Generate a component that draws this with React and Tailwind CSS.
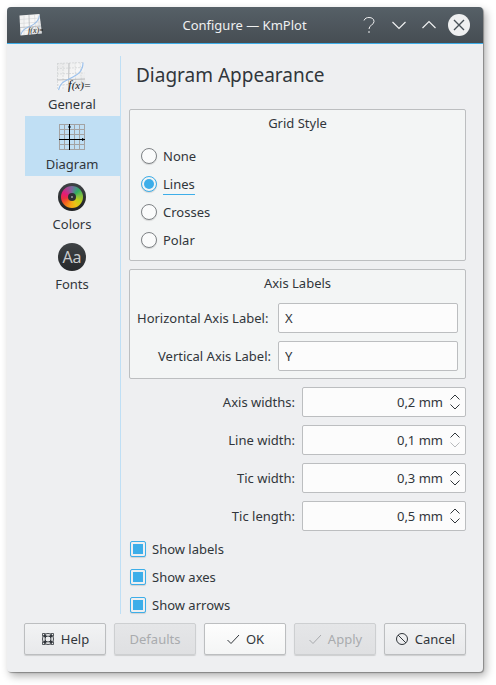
import { useState } from "react";

function PlotIcon() {
  return (
    <svg viewBox="0 0 24 24" className="size-6" aria-hidden="true">
      <defs>
        <linearGradient id="paper" x1="0" y1="0" x2="1" y2="1">
          <stop offset="0" stopColor="#ececec" />
          <stop offset="0.5" stopColor="#fafafa" />
          <stop offset="1" stopColor="#cfd1d3" />
        </linearGradient>
      </defs>
      <path d="M0.500 2.500 20.500 1 23 20.500 1.500 22.500Z" fill="url(#paper)" />
      <path
        d="M1 6.500 21 5M1 10.500 21.500 9M1.500 18 22 16.500M5 2.500V22M15.500 2 17 21M19 1.500 21 20.500"
        stroke="#d3d5d7"
        strokeWidth="0.600"
        fill="none"
      />
      <path d="M1 14.500 22 13M10 2 10.500 21.500" stroke="#abaeb1" strokeWidth="0.700" fill="none" />
      <path d="M2 21.500C4 15 8 15 11 13.500S20 9 20.500 2.500" stroke="#9dbfe6" strokeWidth="1.100" fill="none" />
      <text x="9" y="20" fontFamily="Liberation Serif, serif" fontStyle="italic" fontSize="8" fill="#1c1e20">
        f(x)=
      </text>
    </svg>
  );
}

function GeneralIcon() {
  return (
    <svg viewBox="0 0 32 32" className="size-8 overflow-visible" aria-hidden="true">
      <defs>
        <linearGradient id="sheet" x1="0" y1="0" x2="1" y2="1">
          <stop offset="0" stopColor="#e6e7e8" />
          <stop offset="0.5" stopColor="#f7f7f7" />
          <stop offset="1" stopColor="#dcdee0" />
        </linearGradient>
      </defs>
      <path d="M1 2 27 1 30 26 1 29Z" fill="url(#sheet)" />
      <path
        d="M1 2.500 27 1.500M1 7.500 28 6.500M1 13 28.500 12M1 24 29 23M1.500 2V29M7 2V29M19 1.500 20 28M24 1.500 26 27"
        stroke="#d3d5d7"
        strokeWidth="0.800"
        strokeDasharray="2 1"
        fill="none"
      />
      <path d="M1 19 29 18M13 2 12.500 29" stroke="#adb0b3" strokeWidth="0.800" fill="none" />
      <path d="M2.500 29C5 20 10 20 14 17.500S27 13 27 1.500" stroke="#9cc2ee" strokeWidth="1.200" fill="none" />
      <text x="12" y="28" fontFamily="Liberation Serif, serif" fontStyle="italic" fontSize="11" fill="#101214">
        <tspan fontSize="13">f</tspan>(x)=
      </text>
    </svg>
  );
}

function GridIcon() {
  return (
    <svg viewBox="0 0 32 32" className="size-8" aria-hidden="true">
      <path
        d="M3.500 3V29M8.500 3V29M18.500 3V29M23.500 3V29M28.500 3V29M3 3.500H29M3 8.500H29M3 13.500H29M3 23.500H29M3 28.500H29"
        stroke="#a3a3a3"
        strokeWidth="1"
        fill="none"
      />
      <path d="M13.500 3V29M3 18.500H29" stroke="#000" strokeWidth="1" />
      <path d="M12 6.500 13.500 3.500 15 6.500ZM26 17 29 18.500 26 20Z" fill="#000" />
    </svg>
  );
}

function ColorsIcon() {
  return (
    <span className="flex size-7 items-center justify-center rounded-full bg-linear-to-b from-[#3f4346] to-[#1f2123]">
      <span className="flex size-[22px] items-center justify-center rounded-full bg-[conic-gradient(#7a6aa0_0deg,#4f8f8a_22deg,#2fae62_45deg,#7fc043_80deg,#c0d01c_120deg,#e9c416_155deg,#f6a316_190deg,#f36a1c_225deg,#ea2f3f_260deg,#e51a78_295deg,#b0408f_325deg,#7a6aa0_360deg)]">
        <span className="flex size-2 items-center justify-center rounded-full bg-[#2c3033]">
          <span className="size-0.5 rounded-full bg-[#9da0a2]" />
        </span>
      </span>
    </span>
  );
}

function FontsIcon() {
  return (
    <span className="flex size-7 items-center justify-center rounded-full bg-linear-to-b from-[#3f4346] to-[#27292b] text-base leading-4 text-[#c9cbcc]">
      Aa
    </span>
  );
}

function TickIcon() {
  return (
    <svg viewBox="0 0 14 14" className="size-3.5" fill="none" stroke="currentColor" aria-hidden="true">
      <path d="M1.500 8 5 11.500 13 3" />
    </svg>
  );
}

function HelpIcon() {
  return (
    <svg viewBox="0 0 14 14" className="size-3.5" fill="none" stroke="currentColor" aria-hidden="true">
      <circle cx="7" cy="7" r="5.500" strokeWidth="0.900" />
      <circle cx="7" cy="7" r="3" strokeWidth="0.900" />
      <path d="M3 3 5 5M11 3 9 5M3 11 5 9M11 11 9 9" strokeWidth="2.600" />
      <path d="M1.500 4.500V1.500H4.500M9.500 1.500H12.500V4.500M1.500 9.500V12.500H4.500M9.500 12.500H12.500V9.500" strokeWidth="0.800" />
    </svg>
  );
}

function CancelIcon() {
  return (
    <svg viewBox="0 0 14 14" className="size-3.5" fill="none" stroke="currentColor" aria-hidden="true">
      <circle cx="7" cy="7" r="5.500" />
      <path d="M3 3 11 11" />
    </svg>
  );
}

const pages = [
  { name: "General", Icon: GeneralIcon },
  { name: "Diagram", Icon: GridIcon },
  { name: "Colors", Icon: ColorsIcon },
  { name: "Fonts", Icon: FontsIcon },
];

function TitleBar() {
  return (
    <header className="grid grid-cols-[1fr_auto_1fr] items-center rounded-t border-b border-[#3daee9] bg-linear-to-b from-[#566067] to-[#464d53] pr-[13px] pl-3 text-[#eff0f1]">
      <PlotIcon />
      <h1 className="text-[13px] leading-9">Configure — KmPlot</h1>
      <div className="flex items-center justify-end gap-2">
        <button type="button" aria-label="Help" className="flex size-[22px] items-center justify-center">
          <svg viewBox="0 0 22 22" className="size-[22px]" fill="none" stroke="currentColor">
            <path d="M6 6.500C7 4 9 3.500 11 3.500 14 3.500 16 5 16 7.500 16 11 11 11 11 15" />
            <path d="M11 17V19" />
          </svg>
        </button>
        <button type="button" aria-label="Minimize" className="flex size-[22px] items-center justify-center">
          <svg viewBox="0 0 22 22" className="size-[22px]" fill="none" stroke="currentColor" strokeWidth="1.200">
            <path d="M4.500 8 11 14.500 17.500 8" />
          </svg>
        </button>
        <button type="button" aria-label="Maximize" className="flex size-[22px] items-center justify-center">
          <svg viewBox="0 0 22 22" className="size-[22px]" fill="none" stroke="currentColor" strokeWidth="1.200">
            <path d="M4.500 14 11 7.500 17.500 14" />
          </svg>
        </button>
        <button type="button" aria-label="Close" className="flex size-[22px] items-center justify-center rounded-full bg-[#eff0f1] text-[#475057]">
          <svg viewBox="0 0 22 22" className="size-[22px]" fill="none" stroke="currentColor" strokeWidth="1.400">
            <path d="M6 6 16 16M16 6 6 16" />
          </svg>
        </button>
      </div>
    </header>
  );
}

function Sidebar() {
  return (
    <nav className="ml-px w-24 shrink-0 border-r border-[#bfdff5]">
      {pages.map(({ name, Icon }) => (
        <button
          key={name}
          type="button"
          aria-current={name === "Diagram" ? "page" : undefined}
          className="flex h-15 w-full flex-col items-center pt-[5px] pr-px aria-[current=page]:bg-[#c0dff4]"
        >
          <span className="flex size-8 items-center justify-center">
            <Icon />
          </span>
          <span className="leading-[22px]">{name}</span>
        </button>
      ))}
    </nav>
  );
}

function GridStyle() {
  const [style, setStyle] = useState("Lines");
  return (
    <section aria-label="Grid Style" className="rounded-xs border border-[#bcbec0] bg-[#f3f5f5] pt-1 pb-1.5">
      <h3 className="mb-2.5 text-center leading-[18px]">Grid Style</h3>
      {["None", "Lines", "Crosses", "Polar"].map((name) => (
        <label key={name} className="flex h-7 items-center gap-1.5 pl-[11px]">
          <input
            type="radio"
            name="grid"
            checked={style === name}
            onChange={() => setStyle(name)}
            className="peer size-4 appearance-none rounded-full border border-[#7f8386] bg-[#fafbfb] p-0.5 shadow-[0_1px_1px_#00000020] checked:border-[#3daee9] checked:bg-[#3daee9] checked:bg-clip-content"
          />
          <span className="border-y border-transparent leading-5 peer-checked:border-b-[#3daee9]">{name}</span>
        </label>
      ))}
    </section>
  );
}

function AxisLabels() {
  return (
    <section aria-label="Axis Labels" className="mt-2 rounded-xs border border-[#bcbec0] bg-[#f3f5f5] px-[7px] pt-1 pb-[7px]">
      <h3 className="mb-[11px] text-center leading-[18px]">Axis Labels</h3>
      <div className="grid grid-cols-[134px_1fr] items-center gap-x-[7px] gap-y-2">
        <label htmlFor="horizontal" className="justify-self-start whitespace-nowrap">Horizontal Axis Label:</label>
        <input id="horizontal" defaultValue="X" className="h-[30px] w-full min-w-0 rounded-xs border border-[#bcbec0] bg-[#fcfcfc] px-1.5" />
        <label htmlFor="vertical" className="justify-self-end whitespace-nowrap">Vertical Axis Label:</label>
        <input id="vertical" defaultValue="Y" className="h-[30px] w-full min-w-0 rounded-xs border border-[#bcbec0] bg-[#fcfcfc] px-1.5" />
      </div>
    </section>
  );
}

function Spin({ id, label, value, atMinimum = false }) {
  return (
    <>
      <label htmlFor={id} className="justify-self-end">{label}</label>
      <div className="flex h-[30px] items-center rounded-xs border border-[#bcbec0] bg-[#fcfcfc] pr-1">
        <input id={id} defaultValue={value} className="h-full w-0 min-w-0 flex-1 bg-transparent pr-1.5 text-right" />
        <div className="flex flex-col gap-0.5">
          <button type="button" aria-label={`Increase ${label}`}>
            <svg viewBox="0 0 12 8" className="h-2 w-3" fill="none" stroke="currentColor">
              <path d="M1.500 6.500 6 2 10.500 6.500" />
            </svg>
          </button>
          <button type="button" aria-label={`Decrease ${label}`} disabled={atMinimum} className="disabled:text-[#b9bbbd]">
            <svg viewBox="0 0 12 8" className="h-2 w-3" fill="none" stroke="currentColor">
              <path d="M1.500 1.500 6 6 10.500 1.500" />
            </svg>
          </button>
        </div>
      </div>
    </>
  );
}

function Check({ label }) {
  return (
    <label className="flex h-4 items-center gap-1.5 pl-px">
      <input
        type="checkbox"
        defaultChecked
        className="size-4 appearance-none rounded-xs border border-[#7f8386] bg-[#fafbfb] p-0.5 shadow-[0_1px_1px_#00000020] checked:border-[#3daee9] checked:bg-[#3daee9] checked:bg-clip-content"
      />
      {label}
    </label>
  );
}

function DialogButton({ children, icon, disabled = false, primary = false }) {
  const look = primary
    ? "border-[#bcbec0] from-[#fdfdfd] to-[#f4f5f5]"
    : disabled
      ? "border-[#cdcfd1] from-[#e5e6e8] to-[#dfe0e2] text-[#a9abae]"
      : "border-[#bcbec0] from-[#f2f3f4] to-[#e8e9eb]";
  return (
    <button
      type="button"
      disabled={disabled}
      className={`flex h-8 items-center justify-center gap-1.5 rounded-xs border bg-linear-to-b shadow-[0_1px_1px_#00000024] ${look}`}
    >
      {icon}
      {children}
    </button>
  );
}

export default function App() {
  return (
    <div className="min-h-screen bg-white pt-[7px] pr-[13px] pb-[13px] pl-[7px] font-['Noto_Sans',sans-serif] text-[13px] leading-[18px] text-[#31363b]">
      <main className="rounded bg-[#eeeff1] shadow-[1px_1px_1px_#00000050,3px_4px_8px_#00000050]">
        <TitleBar />
        <div className="px-[17px] pt-3 pb-[17px]">
          <div className="flex gap-2">
            <Sidebar />
            <div className="min-w-0 flex-1 pb-px">
              <h2 className="mb-[15px] pl-[7px] text-[19px] leading-[38px]">Diagram Appearance</h2>
              <GridStyle />
              <AxisLabels />
              <div className="mt-2 grid grid-cols-[1fr_164px] items-center gap-x-[7px] gap-y-2">
                <Spin id="axis-width" label="Axis widths:" value="0,2 mm" />
                <Spin id="line-width" label="Line width:" value="0,1 mm" atMinimum />
                <Spin id="tic-width" label="Tic width:" value="0,3 mm" />
                <Spin id="tic-length" label="Tic length:" value="0,5 mm" />
              </div>
              <div className="mt-2.5 flex flex-col gap-3">
                <Check label="Show labels" />
                <Check label="Show axes" />
                <Check label="Show arrows" />
              </div>
            </div>
          </div>
          <footer className="mt-[9px] grid grid-cols-5 gap-2">
            <DialogButton icon={<HelpIcon />}>Help</DialogButton>
            <DialogButton disabled>Defaults</DialogButton>
            <DialogButton primary icon={<TickIcon />}>OK</DialogButton>
            <DialogButton disabled icon={<TickIcon />}>Apply</DialogButton>
            <DialogButton icon={<CancelIcon />}>Cancel</DialogButton>
          </footer>
        </div>
      </main>
    </div>
  );
}
